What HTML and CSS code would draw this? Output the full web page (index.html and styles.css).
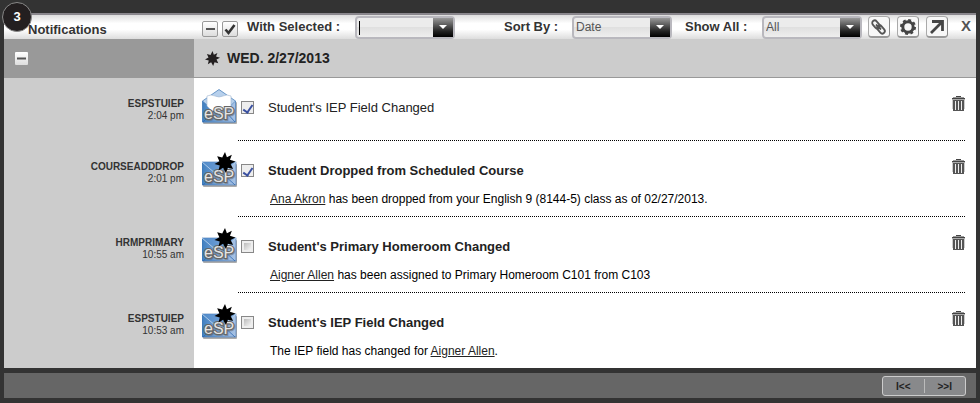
FILE: index.html
```html
<!DOCTYPE html>
<html lang="en">
<head>
    <meta charset="UTF-8">
    <meta name="viewport" content="width=device-width, initial-scale=1.0">
    <title>Notifications</title>
    <link rel="stylesheet" href="styles.css">
</head>
<body>
    <!-- shared icons -->
    <svg class="defs" width="0" height="0" aria-hidden="true">
        <defs>
            <linearGradient id="blue" x1="0" y1="0" x2="1" y2="0">
                <stop offset="0" stop-color="#3f7fc0"/>
                <stop offset="0.5" stop-color="#7da6d6"/>
                <stop offset="1" stop-color="#a9c3e4"/>
            </linearGradient>
            <symbol id="burst" viewBox="-11 -11 22 22">
                <polygon points="0,-11 2,-5.4 7.2,-8 5.2,-2.8 11,-1 5.9,1.6 8.5,6.8 3,5.4 1,11 -2,5.6 -6.8,8.5 -5.5,3.1 -11,1.5 -5.9,-1.4 -8.2,-6.5 -2.9,-5.2"/>
            </symbol>
            <symbol id="mail-open" viewBox="0 0 36 36">
                <rect x="1" y="13" width="34" height="22" rx="1" fill="#777" opacity="0.6"/>
                <path d="M0.5 12 L17 0.5 L33.5 12 V33 H0.5 Z" fill="#b7d0ec" stroke="#4b81bb" stroke-width="0.8"/>
                <path d="M0.5 12 L12 22 H23 L33.5 12 V33 H0.5 Z" fill="url(#blue)" stroke="#4b81bb" stroke-width="0.6"/>
                <path d="M5 7 Q9 5 13 7 T21 7 T29 7 V17 L24 22 H10 L5 17 Z" fill="#fff" stroke="#9fb6d0" stroke-width="0.6"/>
                <path d="M1 33 L12 22 M33 33 L23 22" stroke="#2f68b0" stroke-width="0.8"/>
                <text x="3" y="31" class="esp-shadow">eSP</text>
                <text x="2" y="30" class="esp">eSP</text>
            </symbol>
            <symbol id="mail-new" viewBox="0 0 36 36">
                <rect x="1" y="12" width="34" height="23" rx="1" fill="#777" opacity="0.6"/>
                <rect x="0" y="10" width="34" height="23" fill="url(#blue)" stroke="#3c70ae" stroke-width="0.6"/>
                <path d="M0 10 L14 22 H20 L34 10 Z" fill="#5b93d0" opacity="0.6"/>
                <path d="M0 10 L14 22 H20 L34 10" fill="none" stroke="#c4daf0" stroke-width="0.8"/>
                <path d="M1 33 L13 22 M33 33 L21 22" stroke="#2f68b0" stroke-width="0.8"/>
                <text x="3" y="31" class="esp-shadow">eSP</text>
                <text x="2" y="30" class="esp">eSP</text>
                <use href="#burst" x="12" y="0" width="22" height="21"/>
            </symbol>
            <symbol id="trash" viewBox="0 0 13 15">
                <rect x="4" y="0" width="5" height="1" fill="#444"/>
                <rect x="1" y="1" width="11" height="1" fill="#999"/>
                <rect x="0" y="2" width="13" height="1" fill="#444"/>
                <rect x="0" y="3" width="13" height="1" fill="#aaa"/>
                <path d="M1 4 H12 V15 H1 Z" fill="#555"/>
                <path d="M3.5 5 V14 M6.5 5 V14 M9.5 5 V14" stroke="#eee" stroke-width="1"/>
                <path d="M0.5 4 V13 M12.5 4 V13" stroke="#ccc" stroke-width="1"/>
            </symbol>
        </defs>
    </svg>

    <div class="panel">
        <span class="badge">3</span>

        <header class="toolbar">
            <h1>Notifications</h1>
            <div class="controls">
                <button class="mini" aria-label="Collapse all">
                    <svg width="14" height="14"><path d="M3 7 H12" stroke="#555" stroke-width="2"/></svg>
                </button>
                <button class="mini" aria-label="Select all">
                    <svg width="14" height="14"><path d="M2.5 7.5 L5.5 11 L11.5 3" fill="none" stroke="#333" stroke-width="2.6"/></svg>
                </button>
                <label class="with" for="withSelected">With Selected :</label>
                <span class="combo active">
                    <select id="withSelected"><option></option></select>
                </span>
                <label class="sort" for="sortBy">Sort By :</label>
                <span class="combo">
                    <select id="sortBy"><option>Date</option></select>
                </span>
                <label class="show" for="showAll">Show All :</label>
                <span class="combo">
                    <select id="showAll"><option>All</option></select>
                </span>
                <div class="tools">
                    <button class="tool" aria-label="Link">
                        <svg width="18" height="18" fill="none" stroke="#555" stroke-width="1.8">
                            <rect x="1.5" y="4" width="9" height="5" rx="2.5" transform="rotate(50 6 6.5)"/>
                            <rect x="6.5" y="9" width="9" height="5" rx="2.5" transform="rotate(50 11 11.5)"/>
                            <path d="M6 6.5 L11 11.5"/>
                        </svg>
                    </button>
                    <button class="tool" aria-label="Settings">
                        <svg width="18" height="18" fill="none" stroke="#444">
                            <circle cx="9" cy="9" r="5.2" stroke-width="3"/>
                            <circle cx="9" cy="9" r="7" stroke-width="2" stroke-dasharray="2.9 2.6"/>
                        </svg>
                    </button>
                    <button class="tool" aria-label="Open in new window">
                        <svg width="18" height="18" fill="none" stroke="#444" stroke-width="2.8">
                            <path d="M3 15 L14.5 3.5 M4 3.5 H14.5 V13"/>
                        </svg>
                    </button>
                    <button class="close" aria-label="Close">X</button>
                </div>
            </div>
        </header>

        <main>
            <div class="day">
                <div class="day-side">
                    <button class="fold" aria-label="Collapse day">
                        <svg width="13" height="13"><path d="M2 6.5 H11" stroke="#555" stroke-width="2"/></svg>
                    </button>
                </div>
                <h2><svg width="15" height="15" fill="#231f20"><use href="#burst"/></svg>WED. 2/27/2013</h2>
            </div>

            <article class="row">
                <div class="source"><b>ESPSTUIEP</b><time>2:04 pm</time></div>
                <svg class="mail" width="36" height="36"><use href="#mail-open"/></svg>
                <div class="item">
                    <input type="checkbox" id="n1" checked>
                    <div class="text">
                        <label class="read" for="n1">Student's IEP Field Changed</label>
                    </div>
                    <button class="delete" aria-label="Delete"><svg width="13" height="15"><use href="#trash"/></svg></button>
                </div>
            </article>

            <article class="row">
                <div class="source"><b>COURSEADDDROP</b><time>2:01 pm</time></div>
                <svg class="mail" width="36" height="36"><use href="#mail-new"/></svg>
                <div class="item">
                    <input type="checkbox" id="n2" checked>
                    <div class="text">
                        <label for="n2">Student Dropped from Scheduled Course</label>
                        <p><a href="#">Ana Akron</a> has been dropped from your English 9 (8144-5) class as of 02/27/2013.</p>
                    </div>
                    <button class="delete" aria-label="Delete"><svg width="13" height="15"><use href="#trash"/></svg></button>
                </div>
            </article>

            <article class="row">
                <div class="source"><b>HRMPRIMARY</b><time>10:55 am</time></div>
                <svg class="mail" width="36" height="36"><use href="#mail-new"/></svg>
                <div class="item">
                    <input type="checkbox" id="n3">
                    <div class="text">
                        <label for="n3">Student's Primary Homeroom Changed</label>
                        <p><a href="#">Aigner Allen</a> has been assigned to Primary Homeroom C101 from C103</p>
                    </div>
                    <button class="delete" aria-label="Delete"><svg width="13" height="15"><use href="#trash"/></svg></button>
                </div>
            </article>

            <article class="row">
                <div class="source"><b>ESPSTUIEP</b><time>10:53 am</time></div>
                <svg class="mail" width="36" height="36"><use href="#mail-new"/></svg>
                <div class="item">
                    <input type="checkbox" id="n4">
                    <div class="text">
                        <label for="n4">Student's IEP Field Changed</label>
                        <p>The IEP field has changed for <a href="#">Aigner Allen</a>.</p>
                    </div>
                    <button class="delete" aria-label="Delete"><svg width="13" height="15"><use href="#trash"/></svg></button>
                </div>
            </article>
        </main>

        <footer>
            <nav class="pager">
                <button aria-label="First page">I&lt;&lt;</button>
                <button aria-label="Last page">&gt;&gt;I</button>
            </nav>
        </footer>
    </div>
</body>
</html>
```
FILE: styles.css
```css
* {
    box-sizing: border-box;
}
body {
    margin: 0;
    background: #333;
    color: #222;
    font-family: Arial, "Liberation Sans", sans-serif;
    font-size: 13px;
}
button {
    padding: 0;
    border: 0;
    background: none;
    font-family: inherit;
    cursor: pointer;
}
svg {
    display: block;
}
.defs {
    position: absolute;
}
.panel {
    position: relative;
    padding: 13px 4px 5px;
}
.badge {
    position: absolute;
    left: 2px;
    top: 2px;
    width: 30px;
    height: 30px;
    border: 1px solid #888;
    border-radius: 50%;
    background: #231f20;
    color: #fff;
    font-size: 13px;
    font-weight: bold;
    line-height: 28px;
    text-align: center;
}

/* toolbar */
.toolbar {
    display: flex;
    height: 26px;
    border-top: 2px solid #8a878d;
    background: linear-gradient(#ddd, #fff 35%, #fff 60%, #ddd);
}
h1 {
    width: 190px;
    margin: 0;
    padding: 3px 0 0 24px;
    color: #333;
    font-size: 13px;
    line-height: 24px;
}
.controls {
    flex: 1;
    display: flex;
    align-items: center;
    padding: 0 5px 0 8px;
}
.controls label {
    padding-bottom: 1px;
    color: #333;
    font-weight: bold;
}
.mini {
    width: 16px;
    height: 16px;
    margin: 3px 4px 0 0;
    border: 1px solid #999;
    border-radius: 2px;
    background: linear-gradient(#fff, #ddd);
}
.with {
    width: 108px;
    margin-left: 5px;
}
.sort {
    width: 68px;
    margin-left: 49px;
}
.show {
    width: 77px;
    margin-left: 13px;
}
.combo {
    position: relative;
    width: 100px;
    height: 23px;
    border: 2px solid #b9b8be;
    border-radius: 4px;
    background: linear-gradient(#ececec 50%, #e0e0e0 50%, #eee);
}
.combo select {
    appearance: none;
    width: 100%;
    height: 100%;
    padding: 0 22px 0 2px;
    border: 0;
    outline: 0;
    background: linear-gradient(#999, #222 70%, #000) right / 20px 100% no-repeat;
    color: #555;
    font-family: inherit;
    font-size: 12px;
}
.combo::after {
    content: "";
    position: absolute;
    right: 6px;
    top: 7px;
    border: 4px solid transparent;
    border-top-color: #fff;
    pointer-events: none;
}
/* text cursor in the focused box */
.combo.active::before {
    content: "";
    position: absolute;
    left: 2px;
    top: 3px;
    width: 1px;
    height: 14px;
    background: #000;
}
.tools {
    display: flex;
    align-items: center;
    gap: 7px;
    margin-left: auto;
}
.tool {
    display: grid;
    place-items: center;
    width: 22px;
    height: 22px;
    border: 1px solid #aaa;
    border-right-color: #888;
    border-bottom: 2px solid #999;
    border-radius: 4px;
    background: #f7f7f7;
}
.close {
    width: 10px;
    margin: 0 0 4px 6px;
    color: #555;
    font-size: 15px;
    font-weight: bold;
}

/* list */
main {
    background: linear-gradient(to right, #ccc 190px, #fff 190px);
}
.day {
    display: flex;
    height: 39px;
}
.day-side {
    width: 190px;
    padding: 13px 11px;
    background: #999;
}
.fold {
    width: 13px;
    height: 13px;
    border-radius: 1px;
    background: linear-gradient(#fff, #ddd);
}
h2 {
    flex: 1;
    display: flex;
    align-items: center;
    gap: 7px;
    margin: 0;
    padding-left: 11px;
    border-bottom: 1px solid #999;
    background: #ccc;
    font-size: 14px;
}
.row {
    display: flex;
    padding-right: 11px;
}
.source {
    width: 190px;
    padding: 20px 10px 0 0;
    color: #333;
    font-size: 10px;
    line-height: 12px;
    text-align: right;
}
.source b,
.source time {
    display: block;
}
.mail {
    margin: 11px 0 0 8px;
}
.esp,
.esp-shadow {
    font-family: Arial, "Liberation Sans", sans-serif;
    font-size: 16px;
    fill: #e4e4e4;
    stroke: #666;
    stroke-width: 2px;
    paint-order: stroke;
}
.esp-shadow {
    fill: #444;
    opacity: 0.5;
}
.item {
    flex: 1;
    display: flex;
    align-items: flex-start;
    min-height: 63px;
    border-bottom: 1px dotted #000;
}
.row:last-child .item {
    border-bottom: 0;
}
.item input {
    appearance: none;
    width: 13px;
    height: 13px;
    margin: 23px 14px 0 3px;
    padding: 2px;
    border: 1px solid #888;
    background: linear-gradient(135deg, #bbb, #f5f5f5) content-box, #eee;
}
.item input:checked {
    background: #eee;
}
.item input:checked::after {
    content: "";
    display: block;
    width: 4px;
    height: 8px;
    margin: -1px 0 0 1px;
    border: solid #3a50a0;
    border-width: 0 2px 2px 0;
    transform: rotate(35deg);
}
.text {
    flex: 1;
    padding: 22px 0 9px;
}
.text label {
    display: block;
    font-weight: bold;
    line-height: 16px;
}
.text .read {
    font-weight: normal;
}
.text p {
    margin: 12px 0 0 2px;
    color: #000;
    font-size: 12px;
    line-height: 16px;
}
.text a {
    color: #222;
}
.delete {
    margin-top: 18px;
}

/* footer */
footer {
    display: flex;
    justify-content: flex-end;
    margin-top: 5px;
    padding: 3px 10px 2px;
    background: #666;
}
.pager {
    display: flex;
    width: 84px;
    height: 20px;
    padding: 2px 0;
    border: 1px solid #ccc;
    border-radius: 3px;
    background: #88898b;
}
.pager button {
    flex: 1;
    color: #222;
    font-size: 10px;
    font-weight: bold;
}
.pager button + button {
    border-left: 1px solid #bbb;
}
```
